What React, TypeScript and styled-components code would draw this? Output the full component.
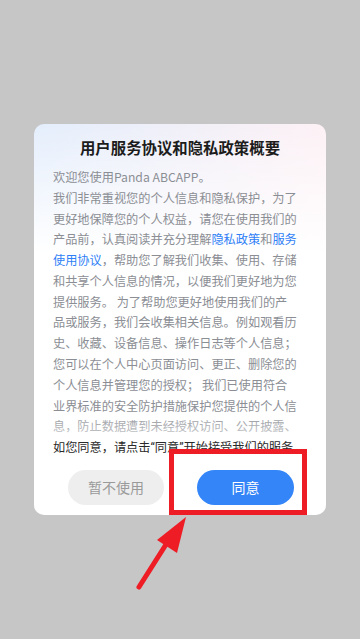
import styled, { createGlobalStyle } from "styled-components"

const GlobalStyle = createGlobalStyle`
  html, body {
    margin: 0;
    padding: 0;
  }
  body {
    background: #c6c6c6;
    font-family: "Noto Sans CJK SC", "Noto Sans", sans-serif;
  }
`

const lines = [
  "我们非常重视您的个人信息和隐私保护，为了",
  "更好地保障您的个人权益，请您在使用我们的",
  null,
  null,
  "和共享个人信息的情况，以便我们更好地为您",
  "提供服务。 为了帮助您更好地使用我们的产",
  "品或服务，我们会收集相关信息。例如观看历",
  "史、收藏、设备信息、操作日志等个人信息；",
  "您可以在个人中心页面访问、更正、删除您的",
  "个人信息并管理您的授权； 我们已使用符合",
  "业界标准的安全防护措施保护您提供的个人信",
  "息，防止数据遭到未经授权访问、公开披露、",
]

const App = () => {
  return (
    <Screen>
      <GlobalStyle />
      <Card>
        <Title>用户服务协议和隐私政策概要</Title>
        <Scroll>
          <Line>欢迎您使用Panda ABCAPP。</Line>
          {lines.map((text, i) => {
            if (i === 2) return (
              <Line key={i}>产品前，认真阅读并充分理解<Link>隐私政策</Link>和<Link>服务</Link></Line>
            )
            if (i === 3) return (
              <Line key={i}><Link>使用协议</Link>，帮助您了解我们收集、使用、存储</Line>
            )
            return <Line key={i}>{text}</Line>
          })}
        </Scroll>
        <Agree>如您同意，请点击<Quote>“</Quote>同意<Quote>”</Quote>开始接受我们的服务。</Agree>
        <Buttons>
          <Button>暂不使用</Button>
          <Button $primary>同意</Button>
        </Buttons>
      </Card>

      <Highlight />
      <Arrow width="360" height="639" viewBox="0 0 360 639">
        <line x1="139" y1="587" x2="172" y2="535" stroke="#ee1c25" strokeWidth="5" strokeLinecap="round" />
        <polygon points="186,517 157,540 177,553" fill="#ee1c25" />
      </Arrow>
    </Screen>
  )
}

const Screen = styled.div`
  position: relative;
  width: 360px;
  height: 639px;
  display: flex;
  align-items: center;
  justify-content: center;
  overflow: hidden;
`

const Card = styled.div`
  width: 292px;
  border-radius: 10px;
  background:
    linear-gradient(to bottom, rgba(255, 255, 255, 0) 0, #fff 130px),
    linear-gradient(to right, #e4eefc, #fdf1f5);
  padding: 12px 18px 10px 19px;
  box-sizing: border-box;
  display: flex;
  flex-direction: column;
`

const Title = styled.div`
  font-size: 15.4px;
  line-height: 22px;
  font-weight: 700;
  color: #1c1c1c;
  text-align: center;
  margin-right: 1px;
`

const Scroll = styled.div`
  position: relative;
  margin-top: 8.6px;
  height: 270.4px;
  overflow: hidden;

  &::after {
    content: "";
    position: absolute;
    left: 0;
    right: 0;
    bottom: 0;
    height: 26px;
    background: linear-gradient(to bottom, rgba(255, 255, 255, 0), rgba(255, 255, 255, 0.55));
  }
`

const Line = styled.div`
  font-size: 12.2px;
  line-height: 20.8px;
  color: #8b8e94;
  white-space: nowrap;
`

const Link = styled.span`
  color: #2f7ff6;
`

const Agree = styled.div`
  font-size: 12.2px;
  line-height: 20.8px;
  color: #2a2a2a;
  white-space: nowrap;
`

const Quote = styled.span`
  font-family: Roboto, "Noto Sans", sans-serif;
`

const Buttons = styled.div`
  margin-top: 10.6px;
  margin-right: -19px;
  margin-left: -18px;
  display: flex;
  justify-content: center;
  gap: 33px;
`

const Button = styled.div<{ $primary?: boolean }>`
  width: ${p => (p.$primary ? "97px" : "96px")};
  height: 35px;
  border-radius: 18px;
  display: flex;
  align-items: center;
  justify-content: center;
  font-size: 14px;
  background: ${p => (p.$primary ? "#3385f8" : "#eeeeee")};
  color: ${p => (p.$primary ? "#ffffff" : "#9a9a9a")};
`

const Highlight = styled.div`
  position: absolute;
  left: 169px;
  top: 449px;
  width: 138px;
  height: 66px;
  box-sizing: border-box;
  border: 5px solid #ee1c25;
`

const Arrow = styled.svg`
  position: absolute;
  left: 0;
  top: 0;
  pointer-events: none;
`

export default App
